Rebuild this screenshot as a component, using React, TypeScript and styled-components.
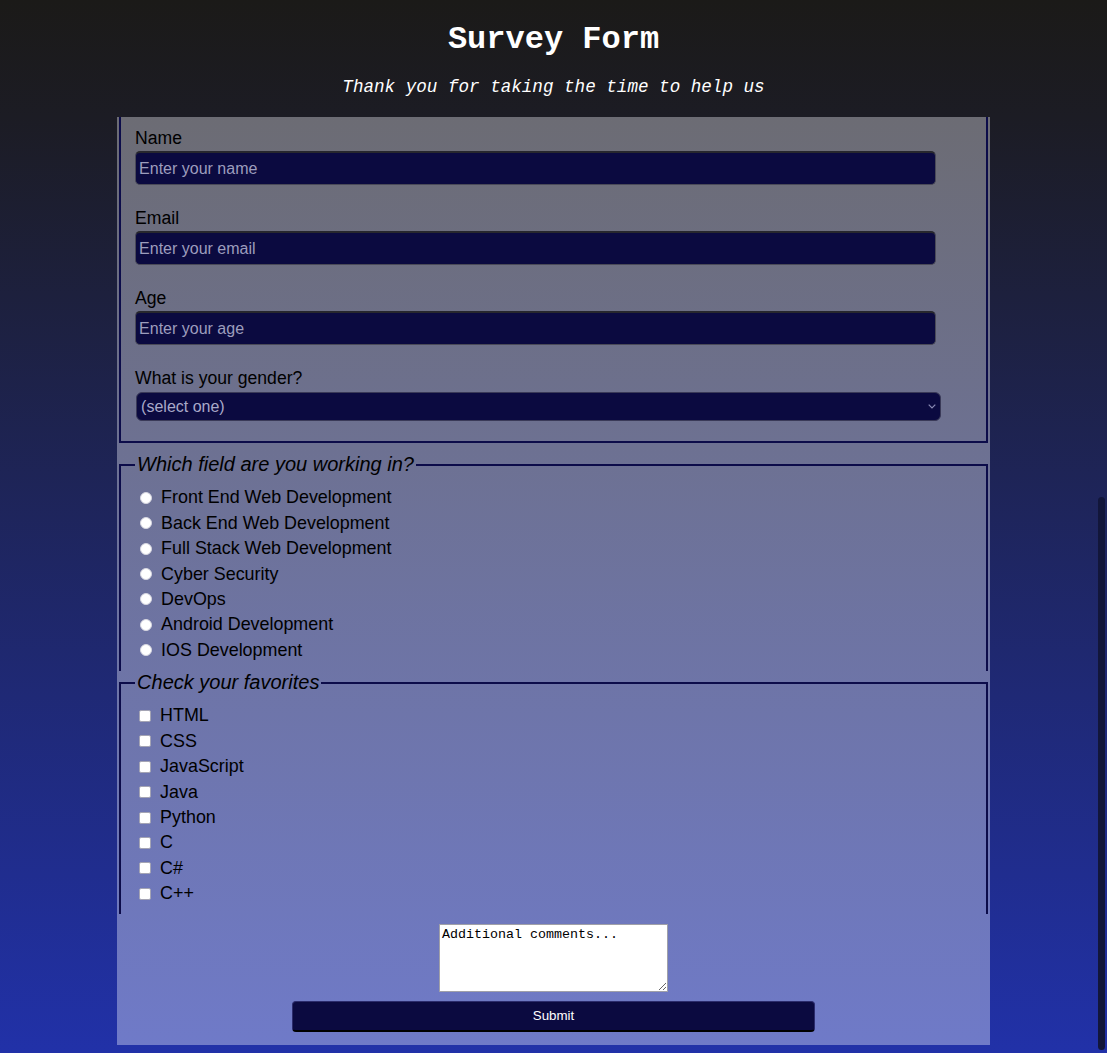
import React from "react";
import styled, { createGlobalStyle } from "styled-components";

const GlobalStyle = createGlobalStyle`
  html, body {
    margin: 0;
    padding: 0;
    overflow: hidden;
  }
  body {
    font-family: "Liberation Sans", Arial, Helvetica, sans-serif;
  }
  *, *::before, *::after {
    box-sizing: border-box;
  }
`;

const Page = styled.div`
  min-height: 100vh;
  padding: 0 8px 8px;
  background: linear-gradient(180deg, #1b1a18 0%, #1c1c24 11%, #2131a8 100%);
`;

const Header = styled.header`
  padding-top: 22px;
  display: flex;
  flex-direction: column;
  align-items: center;
  color: #ffffff;
`;

const Title = styled.h1`
  margin: 0;
  font-family: "Liberation Mono", "Courier New", monospace;
  font-weight: 700;
  font-size: 32px;
  line-height: 36px;
`;

const Subtitle = styled.p`
  margin: 19px 0 0;
  font-family: "Liberation Mono", "Courier New", monospace;
  font-style: italic;
  font-size: 17.6px;
  line-height: 20px;
`;

const Form = styled.form`
  width: 80%;
  margin: 20px auto 0;
  padding: 0 0 13px;
  background: linear-gradient(180deg, #6c6c74 0%, #6f7ac8 100%);
`;

const Fieldset = styled.fieldset<{
  $kind: "plain" | "group";
  $gap?: number;
  $padTop?: number;
  $padBottom?: number;
}>`
  margin: ${(p) => p.$gap ?? 0}px 2px 0;
  min-width: 0;
  border: 2px solid #0c0c4a;
  ${(p) =>
    p.$kind === "plain"
      ? `border-top: none; padding: 11px 14px 20px;`
      : `border-bottom: none; padding: ${p.$padTop ?? 9}px 14px ${p.$padBottom ?? 8}px;`}
`;

const Legend = styled.legend`
  padding: 0 2px;
  font-size: 20px;
  line-height: 23px;
  font-style: italic;
  color: #000;
`;

const Field = styled.div`
  & + & {
    margin-top: 23px;
  }
`;

const FieldLabel = styled.label`
  display: block;
  font-size: 17.6px;
  line-height: 20px;
  color: #000;
`;

const TextInput = styled.input`
  display: block;
  width: 801px;
  height: 34px;
  margin-top: 3px;
  padding: 1px 3px 0;
  background: #0b0a40;
  border: 1px solid #4a4a58;
  border-top: 2px solid #28282e;
  border-radius: 5px;
  color: #d8d8f0;
  font-family: "Liberation Sans", Arial, sans-serif;
  font-size: 16px;
  outline: none;

  &::placeholder {
    color: #9d9dbd;
  }
`;

const SelectWrap = styled.div`
  position: relative;
  width: 805px;
  margin: 4px 0 0 1px;
`;

const Select = styled.select`
  display: block;
  width: 100%;
  height: 29px;
  padding: 0 20px 0 4px;
  appearance: none;
  background: #0b0a40;
  border: 1px solid #3a3a58;
  border-radius: 6px;
  color: #a9a9c9;
  font-family: "Liberation Sans", Arial, sans-serif;
  font-size: 16px;
  outline: none;
`;

const Chevron = styled.svg`
  position: absolute;
  right: 5px;
  top: 12px;
  width: 8px;
  height: 5px;
  pointer-events: none;
`;

const OptionList = styled.div`
  display: flex;
  flex-direction: column;
`;

const OptionRow = styled.label`
  display: flex;
  align-items: center;
  height: 25.45px;
  font-size: 17.9px;
  color: #000;
`;

const Radio = styled.input`
  appearance: none;
  width: 12px;
  height: 12px;
  margin: 0 9px 0 5px;
  border-radius: 50%;
  background: #ffffff;
  border: 1px solid #d6d6e0;
  flex: none;
`;

const Checkbox = styled.input`
  appearance: none;
  width: 12px;
  height: 12px;
  margin: 0 9px 0 4px;
  border-radius: 2px;
  background: #ffffff;
  border: 1px solid #a4a4b4;
  flex: none;
`;

const Comments = styled.textarea`
  display: block;
  width: 229px;
  height: 68px;
  margin: 10px auto 0;
  padding: 2px;
  background: #ffffff;
  border: 1px solid #a0a0a8;
  font-family: "Liberation Mono", "Courier New", monospace;
  font-size: 13.33px;
  line-height: 15px;
  color: #000;

  &::placeholder {
    color: #000;
  }
`;

const SubmitButton = styled.button`
  display: block;
  width: 60%;
  height: 31px;
  margin: 9px auto 0;
  background: #0b0a40;
  color: #ffffff;
  border: 1px solid #2c2c6c;
  border-bottom: 2px solid #000000;
  border-radius: 4px;
  font-family: "Liberation Sans", Arial, sans-serif;
  font-size: 13.33px;
`;

const ScrollThumb = styled.div`
  position: fixed;
  right: 2px;
  top: 497px;
  bottom: 3px;
  width: 7px;
  border-radius: 4px;
  background: #12163a;
`;

const fields = [
  { id: "name", label: "Name", placeholder: "Enter your name", type: "text" },
  { id: "email", label: "Email", placeholder: "Enter your email", type: "email" },
  { id: "age", label: "Age", placeholder: "Enter your age", type: "number" },
];

const roles = [
  "Front End Web Development",
  "Back End Web Development",
  "Full Stack Web Development",
  "Cyber Security",
  "DevOps",
  "Android Development",
  "IOS Development",
];

const favorites = ["HTML", "CSS", "JavaScript", "Java", "Python", "C", "C#", "C++"];

export default function App() {
  return (
    <>
      <GlobalStyle />
      <Page>
        <Header>
          <Title>Survey Form</Title>
          <Subtitle>Thank you for taking the time to help us</Subtitle>
        </Header>
        <Form onSubmit={(e) => e.preventDefault()}>
          <Fieldset $kind="plain">
            {fields.map((f) => (
              <Field key={f.id}>
                <FieldLabel htmlFor={f.id}>{f.label}</FieldLabel>
                <TextInput id={f.id} type={f.type} placeholder={f.placeholder} />
              </Field>
            ))}
            <Field>
              <FieldLabel htmlFor="gender">What is your gender?</FieldLabel>
              <SelectWrap>
                <Select id="gender" defaultValue="">
                  <option value="" disabled>
                    (select one)
                  </option>
                  <option value="male">Male</option>
                  <option value="female">Female</option>
                  <option value="other">Other</option>
                </Select>
                <Chevron viewBox="0 0 8 5" fill="none">
                  <path d="M0.7 0.7 L4 4 L7.3 0.7" stroke="#8a8ab4" strokeWidth="1.2" />
                </Chevron>
              </SelectWrap>
            </Field>
          </Fieldset>

          <Fieldset $kind="group" $gap={10} $padTop={9}>
            <Legend>Which field are you working in?</Legend>
            <OptionList>
              {roles.map((r) => (
                <OptionRow key={r}>
                  <Radio type="radio" name="role" value={r} />
                  {r}
                </OptionRow>
              ))}
            </OptionList>
          </Fieldset>

          <Fieldset $kind="group" $padTop={9} $padBottom={7}>
            <Legend>Check your favorites</Legend>
            <OptionList>
              {favorites.map((f) => (
                <OptionRow key={f}>
                  <Checkbox type="checkbox" value={f} />
                  {f}
                </OptionRow>
              ))}
            </OptionList>
          </Fieldset>

          <Comments placeholder="Additional comments..." />
          <SubmitButton type="submit">Submit</SubmitButton>
        </Form>
      </Page>
      <ScrollThumb />
    </>
  );
}
